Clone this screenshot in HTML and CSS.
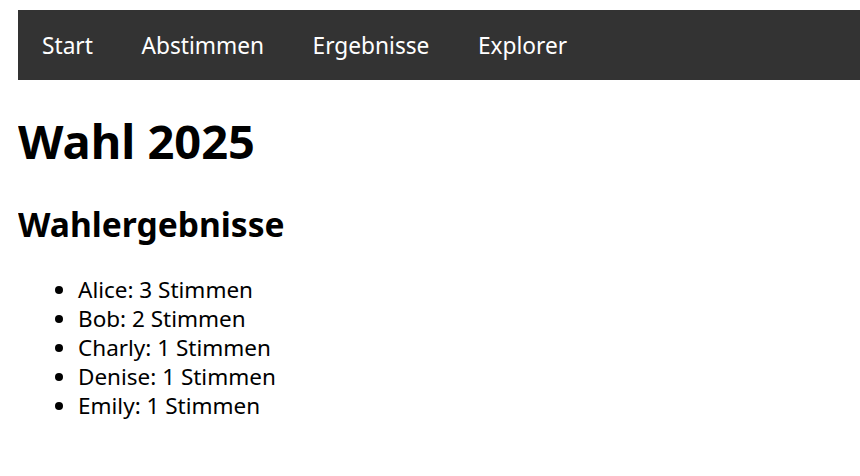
FILE: index.html
```html
<!DOCTYPE html>
<html lang="de">
<head>
<meta charset="utf-8">
<title>Wahl 2025</title>
<link rel="stylesheet" href="styles.css">
</head>
<body>
<nav class="topnav">
  <a href="#" class="nav-link">Start</a>
  <a href="#" class="nav-link">Abstimmen</a>
  <a href="#" class="nav-link">Ergebnisse</a>
  <a href="#" class="nav-link">Explorer</a>
</nav>
<h1 class="title">Wahl 2025</h1>
<h2 class="subtitle">Wahlergebnisse</h2>
<ul class="results">
  <li>Alice: 3 Stimmen</li>
  <li>Bob: 2 Stimmen</li>
  <li>Charly: 1 Stimmen</li>
  <li>Denise: 1 Stimmen</li>
  <li>Emily: 1 Stimmen</li>
</ul>
</body>
</html>
```
FILE: styles.css
```css
html, body {
  background: #ffffff;
}
body {
  margin: 10px 0 0 18px;
  font-family: "Noto Sans", "DejaVu Sans", sans-serif;
  color: #000;
}
.topnav {
  display: flex;
  align-items: flex-start;
  height: 70px;
  background: #333333;
  margin-right: -20px;
}
.nav-link {
  color: #ffffff;
  text-decoration: none;
  font-size: 22.7px;
  padding: 2px 24.5px 0 24px;
  line-height: 68px;
}
.title {
  font-size: 47px;
  font-weight: 700;
  line-height: 56px;
  margin: 33px 0 0 0;
}
.subtitle {
  font-size: 33.6px;
  font-weight: 700;
  line-height: 40px;
  margin: 35px 0 0 0;
}
.results {
  margin: 31px 0 0 0;
  padding-left: 60px;
  font-size: 22.5px;
  line-height: 29px;
}
```
